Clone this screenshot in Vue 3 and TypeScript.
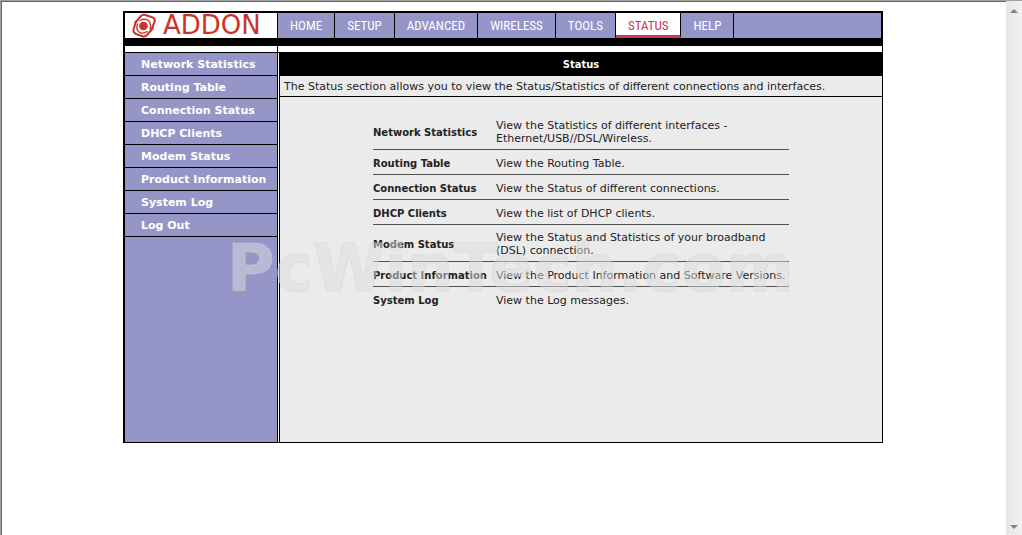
<script setup lang="ts">
interface Topic {
  label: string
  text: string
}

const tabs: string[] = ['HOME', 'SETUP', 'ADVANCED', 'WIRELESS', 'TOOLS', 'STATUS', 'HELP']
const activeTab = 'STATUS'

const topics: Topic[] = [
  { label: 'Network Statistics', text: 'View the Statistics of different interfaces - Ethernet/USB//DSL/Wireless.' },
  { label: 'Routing Table', text: 'View the Routing Table.' },
  { label: 'Connection Status', text: 'View the Status of different connections.' },
  { label: 'DHCP Clients', text: 'View the list of DHCP clients.' },
  { label: 'Modem Status', text: 'View the Status and Statistics of your broadband (DSL) connection.' },
  { label: 'Product Information', text: 'View the Product Information and Software Versions.' },
  { label: 'System Log', text: 'View the Log messages.' },
]

const menu: string[] = [...topics.map((t) => t.label), 'Log Out']
</script>

<template>
  <div class="window">
    <div class="page">
      <div class="frame">
        <header class="top">
          <a class="logo" href="#" aria-label="ADDON">
            <svg width="152" height="25" viewBox="0 0 152 25">
              <g fill="none" stroke="#cc3329" stroke-linecap="round" stroke-linejoin="round">
                <path d="M10 10 L15.500 3.500 Q17.500 1.300 20.500 2 L28 4.500 Q30.500 6 29.500 9 L26 17.500" stroke-width="2" />
                <path d="M28 15 L22 22 Q20 24 17.500 23.200 L11 21 Q8 19.500 8.500 16.500 L11 8.500" stroke-width="2" />
                <path d="M15 7.500 Q19 5 23.500 7.500 Q26.500 11 25 16" stroke-width="1.300" />
                <path d="M12.500 11 Q10.500 16 14 19 Q18 21.500 22 18.500" stroke-width="1.300" />
              </g>
              <circle cx="18.500" cy="13" r="4.300" fill="#cc3329" />
              <text class="brand" x="38" y="21">ADDON</text>
            </svg>
          </a>
          <nav class="tabs">
            <a v-for="tab in tabs" :key="tab" href="#" class="tab" :class="{ active: tab === activeTab }">{{ tab }}</a>
          </nav>
        </header>
        <div class="band"></div>
        <div class="gap"></div>
        <div class="body">
          <nav class="side">
            <a v-for="item in menu" :key="item" href="#">{{ item }}</a>
          </nav>
          <main class="main">
            <h1>Status</h1>
            <p class="intro">
              The Status section allows you to view the Status/Statistics of different connections and interfaces.
            </p>
            <table class="topics">
              <tbody>
                <tr v-for="topic in topics" :key="topic.label">
                  <th scope="row">{{ topic.label }}</th>
                  <td>{{ topic.text }}</td>
                </tr>
              </tbody>
            </table>
          </main>
        </div>
        <div class="watermark">PcWinTech.com</div>
      </div>
    </div>
    <div class="scrollbar">
      <svg width="8" height="4" viewBox="0 0 8 4"><path d="M0 4 L4 0 L8 4 Z" fill="#858585" /></svg>
      <svg width="8" height="4" viewBox="0 0 8 4"><path d="M0 0 L8 0 L4 4 Z" fill="#858585" /></svg>
    </div>
  </div>
</template>

<style>
body {
  margin: 0;
  background: #fff;
}
</style>

<style scoped>
.window {
  box-sizing: border-box;
  display: flex;
  min-height: 100vh;
  border-top: 1px solid #a0a0a0;
  border-left: 1px solid #a0a0a0;
  font-family: "DejaVu Sans", Verdana, sans-serif;
  font-size: 11px;
  color: #222;
}
.page {
  flex: 1;
  border-top: 1px solid #696969;
  border-left: 1px solid #696969;
  padding: 9px 10px 0 8px;
}
.frame {
  position: relative;
  box-sizing: border-box;
  max-width: 760px;
  margin: 0 auto;
  border: 1px solid #000;
  border-width: 2px 1px 1px 2px;
}
.top {
  display: flex;
  height: 25px;
  border-right: 1px solid #000;
}
.logo {
  width: 152px;
  height: 25px;
  border-right: 1px solid #000;
}
.logo svg {
  display: block;
  overflow: visible;
}
.brand {
  font-family: "DejaVu Sans", sans-serif;
  font-size: 26px;
  fill: #cc3329;
}
.tabs {
  flex: 1;
  display: flex;
  background: #9695c8;
}
.tab {
  box-sizing: border-box;
  padding: 0 12px;
  border-right: 1px solid #000;
  font: 400 13px/26px "Roboto Condensed", Roboto, sans-serif;
  color: #fff;
  text-decoration: none;
}
.tab.active {
  background: #fff;
  border-bottom: 3px solid #cc3366;
  color: #cc3366;
}
.band {
  height: 8px;
  background: #000;
}
.gap {
  height: 6px;
  width: 152px;
  border-right: 1px solid #000;
}
.body {
  display: flex;
  min-height: 390px;
  box-sizing: border-box;
  border-top: 1px solid #000;
}
.side {
  width: 152px;
  background: #9695c8;
  border-right: 1px solid #000;
}
.side a {
  display: block;
  padding: 2px 0 0 16px;
  border-bottom: 1px solid #000;
  font-weight: bold;
  line-height: 20px;
  color: #fff;
  text-decoration: none;
  white-space: nowrap;
}
.main {
  flex: 1;
  margin-left: 1px;
  border-left: 1px solid #000;
  background: #ebebeb;
}
h1 {
  margin: 0;
  background: #000;
  color: #fff;
  font-size: 10px;
  line-height: 23px;
  text-align: center;
}
.intro {
  margin: 0;
  padding: 2px 0 0 4px;
  border-bottom: 1px solid #000;
  line-height: 18px;
}
.topics {
  width: 416px;
  margin: 16px auto 0;
  border-collapse: collapse;
  line-height: 13px;
}
.topics th,
.topics td {
  padding: 6px 0 4px;
  height: 14px;
  border-bottom: 1px solid #505050;
  text-align: left;
  vertical-align: middle;
}
.topics th {
  width: 123px;
  font-size: 10px;
  white-space: nowrap;
}
.topics tr:last-child > * {
  border-bottom: 0;
}
.watermark {
  position: absolute;
  left: 102px;
  top: 218px;
  font-size: 65px;
  font-weight: bold;
  line-height: 75px;
  color: rgba(222, 222, 222, 0.5);
  -webkit-text-stroke: 1px rgba(210, 210, 210, 0.4);
  pointer-events: none;
}
.scrollbar {
  box-sizing: border-box;
  width: 16px;
  padding: 8px 4px 6px;
  display: flex;
  flex-direction: column;
  justify-content: space-between;
  background: linear-gradient(90deg, #e6e6e6, #f2f2f2);
}
</style>
